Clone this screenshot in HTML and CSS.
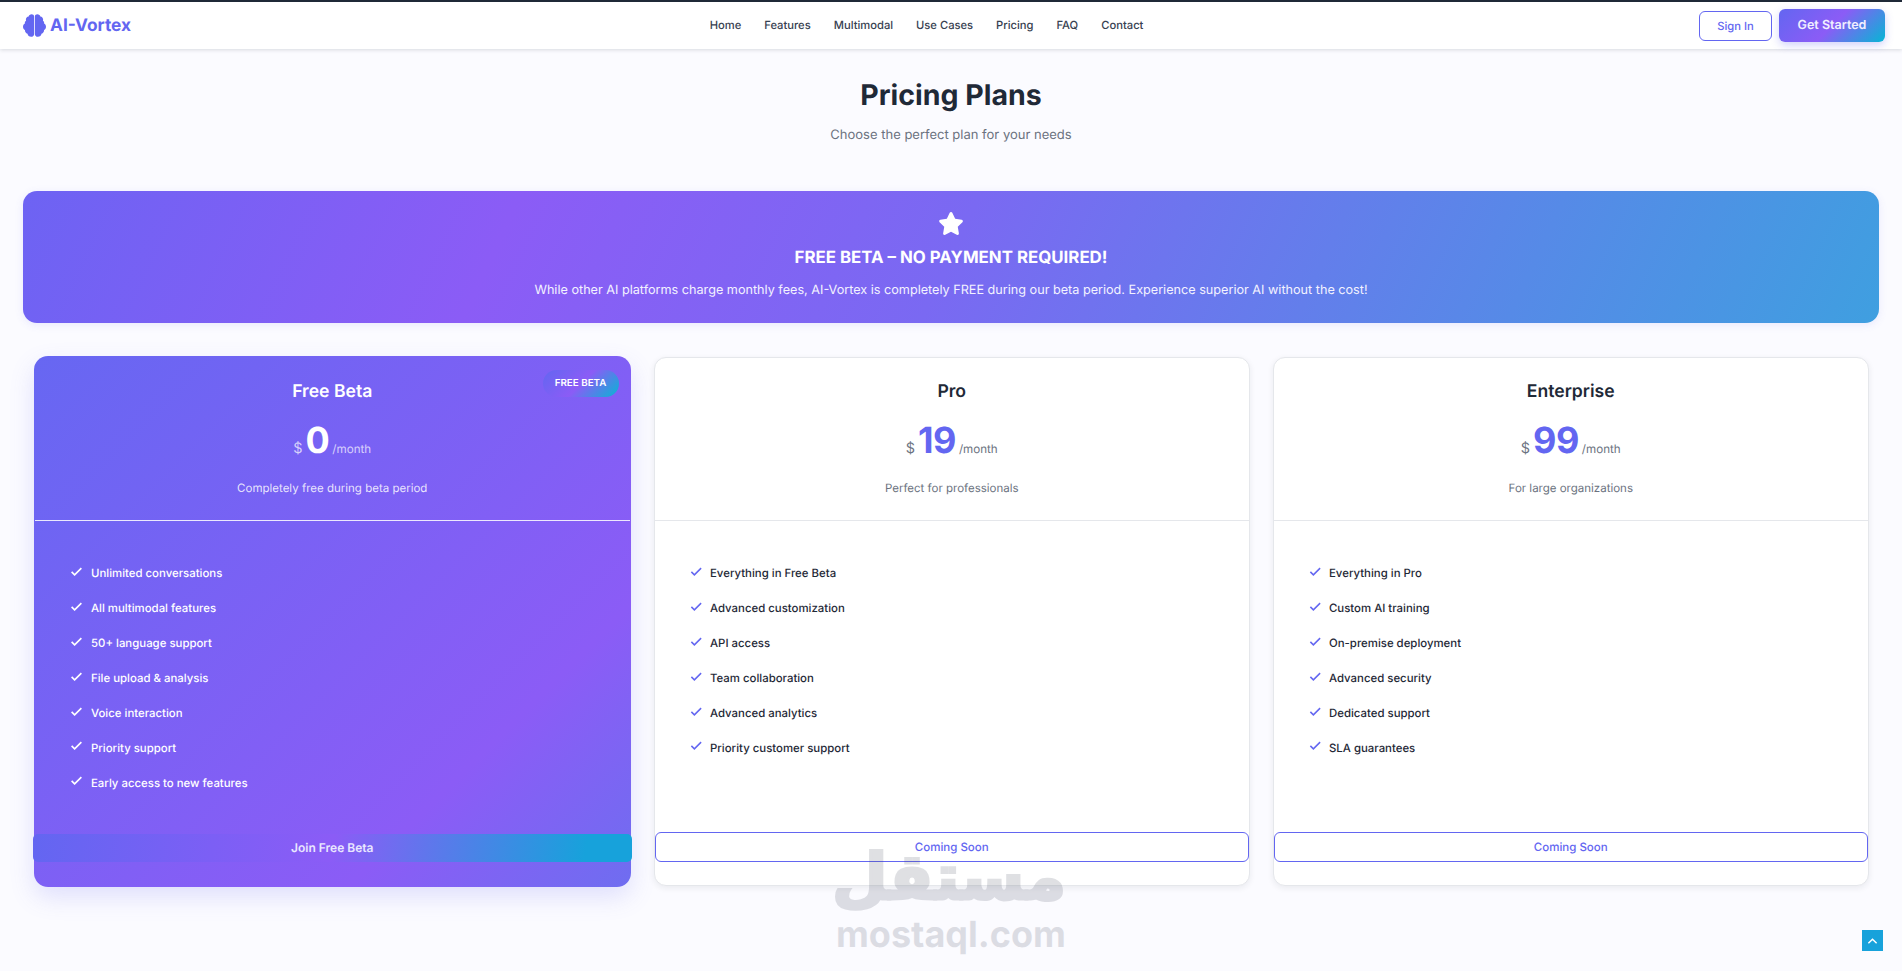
FILE: index.html
```html
<!DOCTYPE html>
<html lang="en">
<head>
<meta charset="utf-8">
<title>AI-Vortex Pricing</title>
<link rel="stylesheet" href="styles.css">
</head>
<body>
<header class="navbar">
  <a class="brand">
    <svg class="brand-icon" viewBox="0 0 24 24"><path d="M11.600 2.500C11.600 1 10.300.3 9 .3 7.400.3 6.200 1.300 5.900 2.700 4.200 2.900 3 4.200 3 5.900c0 .4.100.8.200 1.100C2.100 7.600 1.700 8.800 2 10 .8 10.700 0 12 0 13.300c0 1.500.8 2.700 2 3.400-.1 1.900 1 3.300 2.700 3.800.3 1.700 1.700 3.200 3.800 3.200 1.800 0 3.100-1.200 3.100-2.700z"/><path transform="matrix(-1 0 0 1 24 0)" d="M11.600 2.500C11.600 1 10.300.3 9 .3 7.400.3 6.200 1.300 5.900 2.700 4.200 2.900 3 4.200 3 5.900c0 .4.100.8.200 1.100C2.100 7.600 1.700 8.800 2 10 .8 10.700 0 12 0 13.300c0 1.500.8 2.700 2 3.400-.1 1.900 1 3.300 2.700 3.800.3 1.700 1.700 3.200 3.800 3.200 1.800 0 3.100-1.200 3.100-2.700z"/></svg>
    <span>AI-Vortex</span>
  </a>
  <nav class="nav-links">
    <a>Home</a><a>Features</a><a>Multimodal</a><a>Use Cases</a><a>Pricing</a><a>FAQ</a><a>Contact</a>
  </nav>
  <div class="nav-actions">
    <button class="btn-signin">Sign In</button>
    <button class="btn-start">Get Started</button>
  </div>
</header>

<main class="pricing">
  <div class="section-head">
    <h1>Pricing Plans</h1>
    <p>Choose the perfect plan for your needs</p>
  </div>

  <section class="banner">
    <svg class="star" viewBox="0 0 576 512"><path d="M316.900 18C311.600 7 300.400 0 288.100 0s-23.400 7-28.800 18L195 150.300 51.400 171.500c-12 1.800-22 10.200-25.700 21.700s-.7 24.200 7.900 32.700L137.800 329 113.200 474.700c-2 12 3 24.200 12.900 31.300s23 8 33.800 2.300l128.300-68.500 128.300 68.500c10.800 5.700 23.900 4.900 33.800-2.300s14.900-19.300 12.900-31.300L438.500 329 542.700 225.900c8.600-8.500 11.700-21.200 7.900-32.700s-13.700-19.900-25.700-21.700L381.200 150.300 316.900 18z"/></svg>
    <h2>FREE BETA – NO PAYMENT REQUIRED!</h2>
    <p>While other AI platforms charge monthly fees, AI-Vortex is completely FREE during our beta period. Experience superior AI without the cost!</p>
  </section>

  <section class="plans">
    <article class="plan plan-featured">
      <span class="badge">FREE BETA</span>
      <div class="plan-head">
        <h3>Free Beta</h3>
        <div class="price"><span class="cur">$</span><span class="amt">0</span><span class="per">/month</span></div>
        <p>Completely free during beta period</p>
      </div>
      <ul class="features">
        <li><svg class="check" viewBox="0 0 16 12"><path d="M1.500 6.500 5.500 10.500 14.500 1.500"/></svg>Unlimited conversations</li>
        <li><svg class="check" viewBox="0 0 16 12"><path d="M1.500 6.500 5.500 10.500 14.500 1.500"/></svg>All multimodal features</li>
        <li><svg class="check" viewBox="0 0 16 12"><path d="M1.500 6.500 5.500 10.500 14.500 1.500"/></svg>50+ language support</li>
        <li><svg class="check" viewBox="0 0 16 12"><path d="M1.500 6.500 5.500 10.500 14.500 1.500"/></svg>File upload &amp; analysis</li>
        <li><svg class="check" viewBox="0 0 16 12"><path d="M1.500 6.500 5.500 10.500 14.500 1.500"/></svg>Voice interaction</li>
        <li><svg class="check" viewBox="0 0 16 12"><path d="M1.500 6.500 5.500 10.500 14.500 1.500"/></svg>Priority support</li>
        <li><svg class="check" viewBox="0 0 16 12"><path d="M1.500 6.500 5.500 10.500 14.500 1.500"/></svg>Early access to new features</li>
      </ul>
      <button class="plan-cta cta-join">Join Free Beta</button>
    </article>

    <article class="plan">
      <div class="plan-head">
        <h3>Pro</h3>
        <div class="price"><span class="cur">$</span><span class="amt">19</span><span class="per">/month</span></div>
        <p>Perfect for professionals</p>
      </div>
      <ul class="features">
        <li><svg class="check" viewBox="0 0 16 12"><path d="M1.500 6.500 5.500 10.500 14.500 1.500"/></svg>Everything in Free Beta</li>
        <li><svg class="check" viewBox="0 0 16 12"><path d="M1.500 6.500 5.500 10.500 14.500 1.500"/></svg>Advanced customization</li>
        <li><svg class="check" viewBox="0 0 16 12"><path d="M1.500 6.500 5.500 10.500 14.500 1.500"/></svg>API access</li>
        <li><svg class="check" viewBox="0 0 16 12"><path d="M1.500 6.500 5.500 10.500 14.500 1.500"/></svg>Team collaboration</li>
        <li><svg class="check" viewBox="0 0 16 12"><path d="M1.500 6.500 5.500 10.500 14.500 1.500"/></svg>Advanced analytics</li>
        <li><svg class="check" viewBox="0 0 16 12"><path d="M1.500 6.500 5.500 10.500 14.500 1.500"/></svg>Priority customer support</li>
      </ul>
      <button class="plan-cta cta-soon">Coming Soon</button>
    </article>

    <article class="plan">
      <div class="plan-head">
        <h3>Enterprise</h3>
        <div class="price"><span class="cur">$</span><span class="amt">99</span><span class="per">/month</span></div>
        <p>For large organizations</p>
      </div>
      <ul class="features">
        <li><svg class="check" viewBox="0 0 16 12"><path d="M1.500 6.500 5.500 10.500 14.500 1.500"/></svg>Everything in Pro</li>
        <li><svg class="check" viewBox="0 0 16 12"><path d="M1.500 6.500 5.500 10.500 14.500 1.500"/></svg>Custom AI training</li>
        <li><svg class="check" viewBox="0 0 16 12"><path d="M1.500 6.500 5.500 10.500 14.500 1.500"/></svg>On-premise deployment</li>
        <li><svg class="check" viewBox="0 0 16 12"><path d="M1.500 6.500 5.500 10.500 14.500 1.500"/></svg>Advanced security</li>
        <li><svg class="check" viewBox="0 0 16 12"><path d="M1.500 6.500 5.500 10.500 14.500 1.500"/></svg>Dedicated support</li>
        <li><svg class="check" viewBox="0 0 16 12"><path d="M1.500 6.500 5.500 10.500 14.500 1.500"/></svg>SLA guarantees</li>
      </ul>
      <button class="plan-cta cta-soon">Coming Soon</button>
    </article>
  </section>
</main>

<div class="watermark">
  <span class="wm-ar" lang="ar" dir="rtl">مستقل</span>
  <span class="wm-en">mostaql.com</span>
</div>

<button class="to-top" aria-label="Back to top"><svg viewBox="0 0 12 8"><path d="M1.500 6.500 6 2l4.500 4.500"/></svg></button>
</body>
</html>
```

FILE: styles.css
```css
* { box-sizing: border-box; }
html, body { margin: 0; height: 100%; }
body {
  height: 971px;
  overflow: hidden;
  position: relative;
  font-family: Inter, "Liberation Sans", sans-serif;
  color: #1f2937;
  background: #fbfbff;
  text-rendering: geometricPrecision;
}
h1, h2, h3, p, ul { margin: 0; padding: 0; }
button { font-family: inherit; cursor: pointer; text-rendering: geometricPrecision; }

.navbar {
  height: 49px;
  border-top: 2px solid #1f2937;
  background: #fff;
  box-shadow: 0 1px 4px rgba(31, 41, 55, .16);
  display: flex;
  justify-content: space-between;
  align-items: center;
  padding: 0 17px 0 23px;
}
.brand { display: flex; align-items: center; gap: 4px; color: #6366f1; font-weight: 700; font-size: 17.3px; }
.brand-icon { width: 23px; height: 23px; fill: #6366f1; }
.nav-links { display: flex; gap: 23px; margin-left: 23px; padding-bottom: 2px; font-size: 11.2px; font-weight: 500; color: #374151; }
.nav-actions { display: flex; justify-content: flex-end; align-items: center; gap: 7px; }
.btn-signin {
  width: 73px; height: 30px;
  border: 1px solid #6366f1; border-radius: 6px;
  background: #fff; color: #6366f1;
  font-size: 11.2px; font-weight: 500;
}
.btn-start {
  width: 106px; height: 33px;
  border: 0; border-radius: 6px;
  background: linear-gradient(135deg, #6366f1 0%, #8b5cf6 50%, #06b6d4 100%);
  color: #f1efff;
  font-size: 12.5px; font-weight: 600;
  box-shadow: 0 3px 8px rgba(99, 102, 241, .3);
}

.pricing { padding: 0 23px; }
.section-head { text-align: center; height: 142px; padding-top: 27px; }
.section-head h1 { font-size: 28.5px; line-height: 38px; font-weight: 700; color: #1f2937; }
.section-head p { margin-top: 11px; font-size: 13px; line-height: 20px; color: #6b7280; }

.banner {
  height: 132px;
  border-radius: 14px;
  background: linear-gradient(115deg, #6d63f3 0%, #8b5cf6 26%, #7a69f2 50%, #3f9fe0 100%);
  color: #fff;
  text-align: center;
  padding-top: 21px;
  box-shadow: 0 2px 8px rgba(99, 102, 241, .12);
}
.star { display: block; width: 26px; height: 23px; margin: 0 auto; fill: #fff; }
.banner h2 { margin-top: 11px; font-size: 16.85px; line-height: 24px; font-weight: 700; }
.banner p { margin-top: 11px; font-size: 12.65px; line-height: 20px; color: #f3f2ff; }

.plans {
  display: grid;
  grid-template-columns: repeat(3, 1fr);
  gap: 23.5px;
  padding: 34px 10.5px 0 12px;
}
.plan {
  position: relative;
  height: 529px;
  background: #fff;
  border: 1px solid #e5e7eb;
  border-radius: 12px;
  box-shadow: 0 2px 6px rgba(31, 41, 55, .08);
  display: flex;
  flex-direction: column;
}
.plan-head {
  height: 163px;
  border-bottom: 1px solid #e5e7eb;
  text-align: center;
  padding-top: 22px;
}
.plan-head h3 { font-size: 17.6px; line-height: 24px; font-weight: 600; color: #1f2937; }
.price { display: flex; justify-content: center; align-items: baseline; margin-top: 14px; height: 44px; line-height: 44px; }
.cur { font-size: 14.4px; color: #6b7280; margin-right: 3px; }
.amt { font-size: 36px; font-weight: 700; letter-spacing: -.5px; color: #6366f1; }
.per { font-size: 11.6px; color: #6b7280; margin-left: 3px; }
.plan-head p { margin-top: 17px; font-size: 11.5px; line-height: 18px; color: #6b7280; }

.features { list-style: none; padding: 35px 35px 0; flex: 1; }
.features li { display: flex; align-items: center; height: 34.9px; font-size: 11.4px; font-weight: 500; color: #1f2937; }
.check { width: 12.5px; height: 9px; margin-right: 7.5px; position: relative; top: -2px; fill: none; stroke: #6366f1; stroke-width: 2; }

.plan-cta { display: block; height: 30px; margin-bottom: 23px; padding-bottom: 2px; font-size: 11.5px; font-weight: 500; border-radius: 6px; }
.cta-soon { background: transparent; border: 1px solid #6366f1; color: #6366f1; }

.plan-featured {
  margin: -1px 0 -1px -1px;
  height: 531px;
  border: 0;
  border-radius: 14px;
  color: #fff;
  background: linear-gradient(135deg, #6767f2 0%, #8b5cf6 75%, #6f6df0 100%);
  box-shadow: 0 10px 24px rgba(99, 102, 241, .18);
}
.plan-featured .plan-head { height: 165px; border-bottom-color: rgba(255, 255, 255, .85); margin: 0 1px; padding-top: 24px; }
.plan-featured h3 { color: #fff; }
.plan-featured .cur, .plan-featured .per { color: rgba(255, 255, 255, .72); }
.plan-featured .amt { color: #fff; }
.plan-featured p { color: rgba(255, 255, 255, .85); }
.plan-featured .features { padding-left: 36px; padding-top: 35px; }
.plan-featured .features li { color: #fff; }
.plan-featured .check { width: 13px; margin-right: 8px; stroke: #fff; stroke-width: 2.2; }
.cta-join {
  margin: 0 -1px 25px;
  height: 28px;
  border: 0;
  border-radius: 5px;
  padding-bottom: 2px;
  font-size: 12px;
  color: #e9e7ff;
  font-weight: 600;
  background: linear-gradient(100deg, #6366f1 0%, #7c5ff5 30%, #8b5cf6 50%, #17a2db 92%);
}
.badge {
  position: absolute;
  top: 14px; right: 12px;
  width: 76px; height: 27px;
  border-radius: 14px;
  display: flex; align-items: center; justify-content: center;
  font-size: 9.8px; font-weight: 600; color: #fff;
  background: linear-gradient(135deg, #6366f1 0%, #8b5cf6 50%, #06b6d4 100%);
}

.watermark {
  position: absolute;
  left: 836px; top: 840px;
  width: 230px;
  text-align: center;
  color: #464b5f;
  opacity: .17;
  pointer-events: none;
}
.wm-ar { display: block; font-family: "DejaVu Sans", sans-serif; font-weight: 700; font-size: 64px; line-height: 76px; -webkit-text-stroke: 3px #464b5f; }
.wm-en { display: block; font-family: Inter, sans-serif; font-weight: 700; font-size: 36px; line-height: 36px; }

.to-top {
  position: absolute;
  right: 19px; bottom: 20px;
  width: 21px; height: 21px;
  border: 0; padding: 0;
  background: #17a2db;
  display: flex; align-items: center; justify-content: center;
}
.to-top svg { width: 11px; height: 8px; fill: none; stroke: #fff; stroke-width: 1.6; }
```
